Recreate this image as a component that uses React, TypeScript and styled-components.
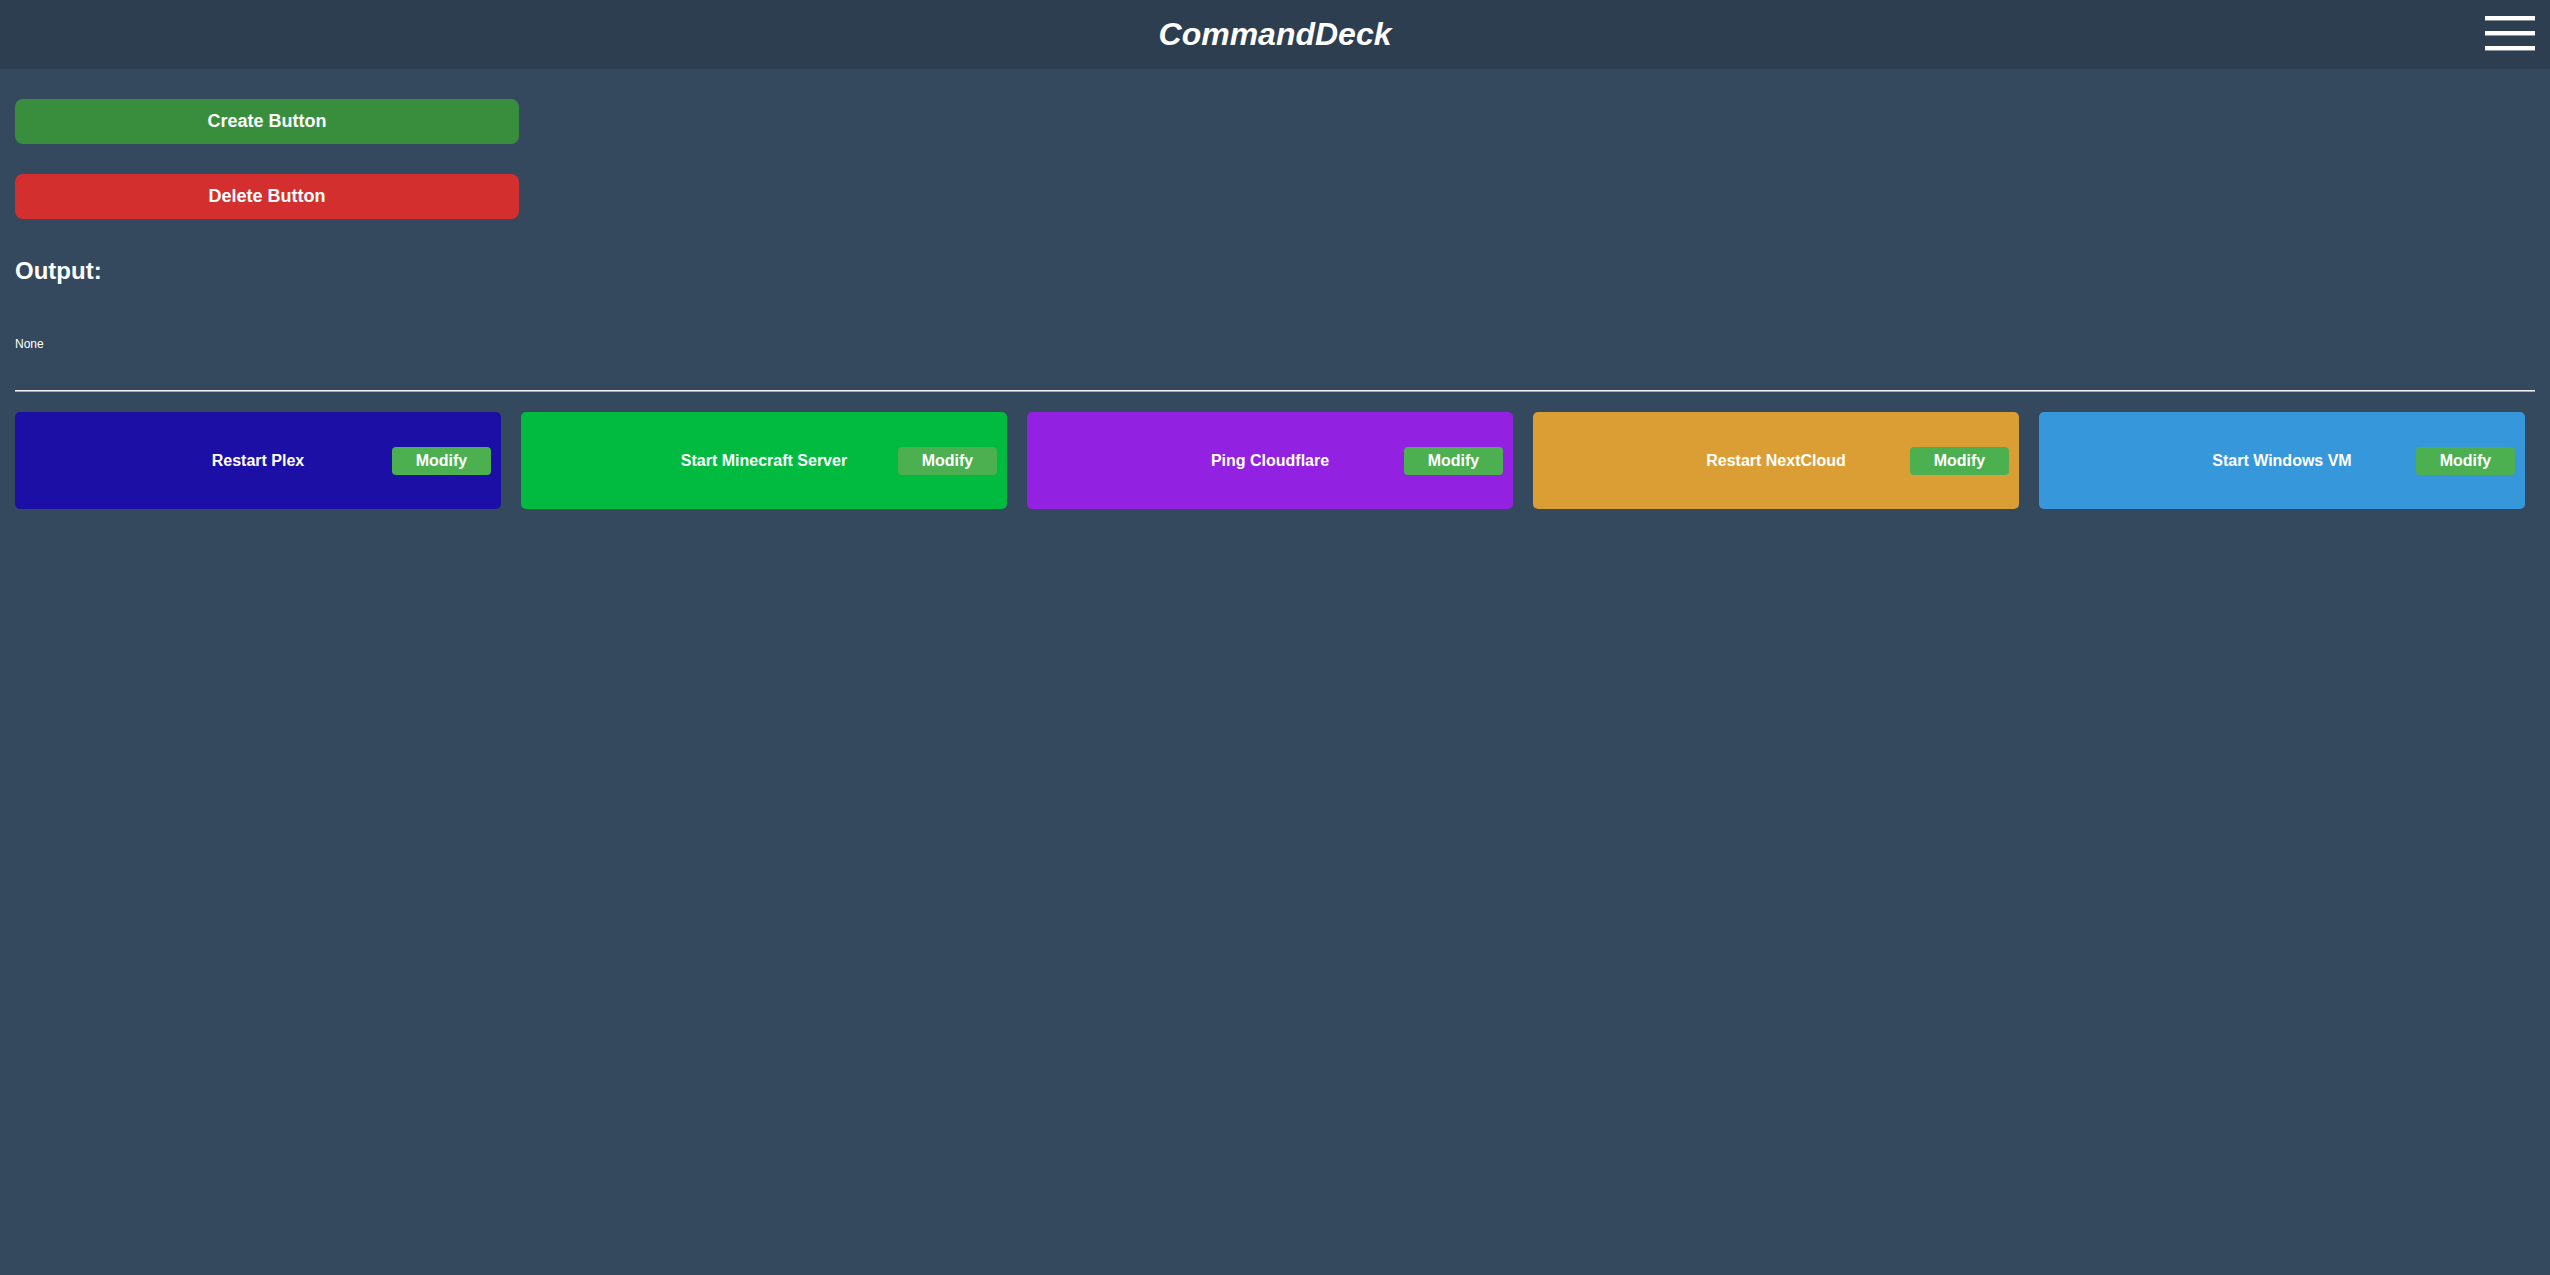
import React from "react";
import styled, { createGlobalStyle } from "styled-components";

const GlobalStyle = createGlobalStyle`
  html, body {
    margin: 0;
    padding: 0;
    background: #34495e;
    font-family: "Liberation Sans", Arial, sans-serif;
    color: #ffffff;
  }
  * { box-sizing: border-box; }
`;

const Header = styled.header`
  height: 69px;
  background: #2c3e50;
  display: grid;
  grid-template-columns: 1fr auto 1fr;
  align-items: center;
`;

const Title = styled.h1`
  grid-column: 2;
  margin: 0;
  font-size: 32px;
  font-weight: bold;
  font-style: italic;
  color: #ffffff;
`;

const Burger = styled.div`
  grid-column: 3;
  justify-self: end;
  align-self: start;
  margin: 16px 15px 0 0;
  display: flex;
  flex-direction: column;
  gap: 11px;
`;

const BurgerBar = styled.span`
  display: block;
  width: 50px;
  height: 4px;
  background: #ffffff;
  box-shadow: 0 1px 0 rgba(255, 255, 255, 0.45);
`;

const Main = styled.main`
  padding: 30px 15px 0;
  display: flex;
  flex-direction: column;
`;

const ActionButton = styled.button<{ $bg: string }>`
  width: 504px;
  height: 45px;
  border: none;
  border-radius: 8px;
  background: ${(p) => p.$bg};
  color: #ffffff;
  font-family: "Liberation Sans", Arial, sans-serif;
  font-size: 18px;
  font-weight: bold;
  display: flex;
  align-items: center;
  justify-content: center;
  cursor: pointer;
  & + & {
    margin-top: 30px;
  }
`;

const OutputHeading = styled.h2`
  margin: 38px 0 0;
  font-size: 24px;
  font-weight: bold;
`;

const OutputText = styled.p`
  margin: 52px 0 0;
  font-size: 12px;
  font-weight: normal;
`;

const Divider = styled.hr`
  margin: 39px 0 0;
  height: 0;
  border: none;
  border-top: 1px solid #f0f0f0;
  border-bottom: 1px solid #a4aab2;
`;

const Grid = styled.div`
  margin-top: 20px;
  display: grid;
  grid-template-columns: repeat(5, 486px);
  gap: 20px;
`;

const Card = styled.div<{ $bg: string }>`
  position: relative;
  height: 97px;
  border-radius: 5px;
  background: ${(p) => p.$bg};
  display: flex;
  align-items: center;
  justify-content: center;
`;

const CardLabel = styled.span`
  font-size: 16px;
  font-weight: bold;
  color: #ffffff;
`;

const ModifyButton = styled.button`
  position: absolute;
  right: 10px;
  top: 35px;
  width: 99px;
  height: 28px;
  border: none;
  border-radius: 4px;
  background: #4caf50;
  color: #ffffff;
  font-family: "Liberation Sans", Arial, sans-serif;
  font-size: 16px;
  font-weight: bold;
  padding: 0;
  cursor: pointer;
`;

const commands = [
  { name: "Restart Plex", color: "#1b0fa5" },
  { name: "Start Minecraft Server", color: "#00bb40" },
  { name: "Ping Cloudflare", color: "#9321e1" },
  { name: "Restart NextCloud", color: "#db9e34" },
  { name: "Start Windows VM", color: "#3698db" },
];

export default function App() {
  return (
    <>
      <GlobalStyle />
      <Header>
        <Title>CommandDeck</Title>
        <Burger>
          <BurgerBar />
          <BurgerBar />
          <BurgerBar />
        </Burger>
      </Header>
      <Main>
        <ActionButton $bg="#388e3c">Create Button</ActionButton>
        <ActionButton $bg="#d32f2f">Delete Button</ActionButton>
        <OutputHeading>Output:</OutputHeading>
        <OutputText>None</OutputText>
        <Divider />
        <Grid>
          {commands.map((c) => (
            <Card key={c.name} $bg={c.color}>
              <CardLabel>{c.name}</CardLabel>
              <ModifyButton>Modify</ModifyButton>
            </Card>
          ))}
        </Grid>
      </Main>
    </>
  );
}
